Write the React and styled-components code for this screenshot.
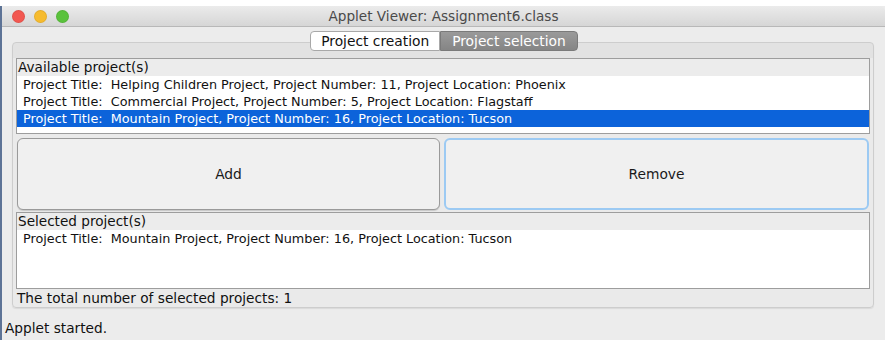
import React from 'react';
import styled, { createGlobalStyle } from 'styled-components';

const Global = createGlobalStyle`
  *, *::before, *::after { box-sizing: border-box; }
  html, body { margin: 0; padding: 0; background: #ffffff; }
  body { font-family: "DejaVu Sans", "Liberation Sans", sans-serif; }
`;

const Window = styled.div`
  width: 885px;
  height: 334px;
  margin-top: 6px;
  display: flex;
  flex-direction: column;
  background: #ececec;
  border-left: 2px solid #5d7396;
  overflow: hidden;
`;

const TitleBar = styled.div`
  height: 21px;
  flex-shrink: 0;
  display: flex;
  align-items: center;
  position: relative;
  background: linear-gradient(#ebebeb, #d6d6d6);
  border-bottom: 1px solid #b8b8b8;
  border-top-left-radius: 5px;
  border-top-right-radius: 5px;
`;

const Lights = styled.div`
  display: flex;
  gap: 9px;
  padding-left: 10px;
`;

const Light = styled.span`
  width: 13px;
  height: 13px;
  border-radius: 50%;
  background: ${p => p.color};
  box-shadow: inset 0 0 0 1px rgba(0, 0, 0, 0.08);
`;

const Title = styled.div`
  position: absolute;
  left: 0;
  right: 0;
  text-align: center;
  font-size: 13.6px;
  color: #4a4a4a;
  pointer-events: none;
`;

const Body = styled.div`
  display: flex;
  flex-direction: column;
  padding: 4px 11px 0 10px;
`;

const Tabs = styled.div`
  display: flex;
  justify-content: center;
  position: relative;
  z-index: 1;
  margin-bottom: -9px;
  padding-left: 2px;
`;

const Tab = styled.div`
  height: 20px;
  display: flex;
  align-items: center;
  padding: 0 ${p => (p.active ? 11 : 10)}px;
  font-size: 13.8px;
  color: ${p => (p.active ? '#ffffff' : '#111111')};
  background: ${p => (p.active ? 'linear-gradient(#9a9a9a, #858585)' : '#ffffff')};
  border: 1px solid ${p => (p.active ? '#7a7a7a' : '#a8a8a8')};
  border-radius: ${p => (p.first ? '4px 0 0 4px' : '0 4px 4px 0')};
`;

const Panel = styled.div`
  height: 266px;
  display: flex;
  flex-direction: column;
  padding: 15px 3px 0 3px;
  background: linear-gradient(#e2e2e2 0, #e2e2e2 15px, #eaeaea 15px);
  border: 1px solid #cdcdcd;
  border-radius: 4px;
  box-shadow: 0 1px 1px rgba(0, 0, 0, 0.08);
`;

const ListBox = styled.div`
  height: ${p => p.h}px;
  display: flex;
  flex-direction: column;
  border: 1px solid #9d9d9d;
  background: #ffffff;
  flex-shrink: 0;
`;

const ListLabel = styled.div`
  height: 17px;
  line-height: 17px;
  padding-left: 1px;
  font-size: 13.6px;
  color: #111;
  background: #ececec;
`;

const Row = styled.div`
  height: 17px;
  line-height: 17px;
  padding-left: 6px;
  font-size: 12.8px;
  white-space: pre;
  color: ${p => (p.selected ? '#ffffff' : '#111111')};
  background: ${p => (p.selected ? '#0c63da' : 'transparent')};
`;

const Buttons = styled.div`
  display: flex;
  gap: 4px;
  margin: 4px 1px 2px 1px;
`;

const Button = styled.button`
  flex: 1;
  height: 72px;
  font-family: inherit;
  font-size: 13.8px;
  color: #1a1a1a;
  background: #f0f0f0;
  border: ${p => (p.focused ? '2px solid #9ccaf3' : '1px solid #9a9a9a')};
  border-radius: 6px;
  box-shadow: ${p => (p.focused ? 'none' : '0 1px 1px rgba(0,0,0,0.15)')};
`;

const Status = styled.div`
  height: 18px;
  line-height: 19px;
  padding-left: 1px;
  font-size: 13.7px;
  color: #111;
`;

const Footer = styled.div`
  margin-top: 12px;
  height: 16px;
  line-height: 16px;
  padding-left: 3px;
  font-size: 13.7px;
  color: #111;
`;

const available = [
  'Project Title:  Helping Children Project, Project Number: 11, Project Location: Phoenix',
  'Project Title:  Commercial Project, Project Number: 5, Project Location: Flagstaff',
  'Project Title:  Mountain Project, Project Number: 16, Project Location: Tucson',
];

export default function App() {
  return (
    <>
      <Global />
      <Window>
        <TitleBar>
          <Lights>
            <Light color="#f25750" />
            <Light color="#f6bb2e" />
            <Light color="#5ac23c" />
          </Lights>
          <Title>Applet Viewer: Assignment6.class</Title>
        </TitleBar>
        <Body>
          <Tabs>
            <Tab first>Project creation</Tab>
            <Tab active>Project selection</Tab>
          </Tabs>
          <Panel>
            <ListBox h={76}>
              <ListLabel>Available project(s)</ListLabel>
              {available.map((t, i) => (
                <Row key={i} selected={i === 2}>{t}</Row>
              ))}
            </ListBox>
            <Buttons>
              <Button>Add</Button>
              <Button focused>Remove</Button>
            </Buttons>
            <ListBox h={77}>
              <ListLabel>Selected project(s)</ListLabel>
              <Row>{available[2]}</Row>
            </ListBox>
            <Status>The total number of selected projects: 1</Status>
          </Panel>
        </Body>
        <Footer>Applet started.</Footer>
      </Window>
    </>
  );
}
